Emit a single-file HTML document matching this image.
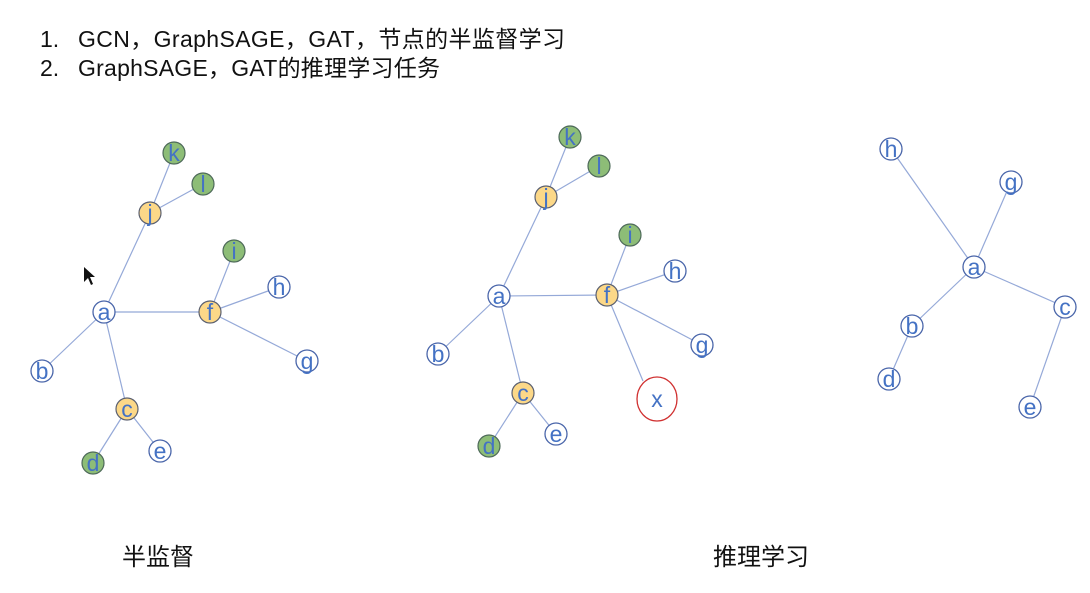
<!DOCTYPE html>
<html><head><meta charset="utf-8">
<style>
html,body{margin:0;padding:0;background:#fff;width:1090px;height:593px;overflow:hidden}
svg{display:block}
.t{font-family:"Liberation Sans","Noto Sans CJK SC",sans-serif;fill:#111}
.n{font-family:"Liberation Sans",sans-serif;font-size:23px;fill:#4472c4;text-anchor:middle}
line{stroke:#95a9d8;stroke-width:1.2}
.w{fill:#fff;stroke:#4a66aa;stroke-width:1.3}
.y{fill:#fcd888;stroke:#5b6070;stroke-width:1.2}
.g{fill:#8dbd77;stroke:#4e6a5a;stroke-width:1.2}
</style></head><body>
<svg width="1090" height="593" viewBox="0 0 1090 593">
<text class="t" x="40" y="47" font-size="23">1.</text>
<text class="t" x="78" y="47" font-size="23" textLength="487" lengthAdjust="spacing">GCN，GraphSAGE，GAT，节点的半监督学习</text>
<text class="t" x="40" y="76" font-size="23">2.</text>
<text class="t" x="78" y="76" font-size="23" textLength="362" lengthAdjust="spacing">GraphSAGE，GAT的推理学习任务</text>
<text class="t" x="122" y="565" font-size="24">半监督</text>
<text class="t" x="713" y="565" font-size="24">推理学习</text>

<!-- graph 1 -->
<g>
<line x1="174" y1="153" x2="150" y2="213"/><line x1="203" y1="184" x2="150" y2="213"/>
<line x1="150" y1="213" x2="104" y2="312"/><line x1="104" y1="312" x2="210" y2="312"/>
<line x1="234" y1="251" x2="210" y2="312"/><line x1="279" y1="287" x2="210" y2="312"/>
<line x1="307" y1="361" x2="210" y2="312"/><line x1="104" y1="312" x2="42" y2="371"/>
<line x1="104" y1="312" x2="127" y2="409"/><line x1="127" y1="409" x2="160" y2="451"/>
<line x1="127" y1="409" x2="93" y2="463"/>
<circle class="g" cx="174" cy="153" r="11"/><text class="n" x="174" y="161">k</text>
<circle class="g" cx="203" cy="184" r="11"/><text class="n" x="203" y="192">l</text>
<circle class="y" cx="150" cy="213" r="11"/><text class="n" x="150" y="221">j</text>
<circle class="g" cx="234" cy="251" r="11"/><text class="n" x="234" y="259">i</text>
<circle class="w" cx="279" cy="287" r="11"/><text class="n" x="279" y="295">h</text>
<circle class="w" cx="104" cy="312" r="11"/><text class="n" x="104" y="320">a</text>
<circle class="y" cx="210" cy="312" r="11"/><text class="n" x="210" y="320">f</text>
<circle class="w" cx="307" cy="361" r="11"/><text class="n" x="307" y="369">g</text>
<circle class="w" cx="42" cy="371" r="11"/><text class="n" x="42" y="379">b</text>
<circle class="y" cx="127" cy="409" r="11"/><text class="n" x="127" y="417">c</text>
<circle class="w" cx="160" cy="451" r="11"/><text class="n" x="160" y="459">e</text>
<circle class="g" cx="93" cy="463" r="11"/><text class="n" x="93" y="471">d</text>
</g>
<path d="M84 267 L84 282 L88 278 L91 285 L93 284 L90 277 L95 277 Z" fill="#111"/>

<!-- graph 2 -->
<g>
<line x1="570" y1="137" x2="546" y2="197"/><line x1="599" y1="166" x2="546" y2="197"/>
<line x1="546" y1="197" x2="499" y2="296"/><line x1="499" y1="296" x2="607" y2="295"/>
<line x1="630" y1="235" x2="607" y2="295"/><line x1="675" y1="271" x2="607" y2="295"/>
<line x1="702" y1="345" x2="607" y2="295"/><line x1="607" y1="295" x2="643" y2="381"/>
<line x1="499" y1="296" x2="438" y2="354"/><line x1="499" y1="296" x2="523" y2="393"/>
<line x1="523" y1="393" x2="556" y2="434"/><line x1="523" y1="393" x2="489" y2="446"/>
<circle class="g" cx="570" cy="137" r="11"/><text class="n" x="570" y="145">k</text>
<circle class="g" cx="599" cy="166" r="11"/><text class="n" x="599" y="174">l</text>
<circle class="y" cx="546" cy="197" r="11"/><text class="n" x="546" y="205">j</text>
<circle class="g" cx="630" cy="235" r="11"/><text class="n" x="630" y="243">i</text>
<circle class="w" cx="675" cy="271" r="11"/><text class="n" x="675" y="279">h</text>
<circle class="w" cx="499" cy="296" r="11"/><text class="n" x="499" y="304">a</text>
<circle class="y" cx="607" cy="295" r="11"/><text class="n" x="607" y="303">f</text>
<circle class="w" cx="702" cy="345" r="11"/><text class="n" x="702" y="353">g</text>
<circle class="w" cx="438" cy="354" r="11"/><text class="n" x="438" y="362">b</text>
<circle class="y" cx="523" cy="393" r="11"/><text class="n" x="523" y="401">c</text>
<circle class="w" cx="556" cy="434" r="11"/><text class="n" x="556" y="442">e</text>
<circle class="g" cx="489" cy="446" r="11"/><text class="n" x="489" y="454">d</text>
<ellipse cx="657" cy="399" rx="20" ry="22" fill="#fff" stroke="#d03030" stroke-width="1.3"/>
<text class="n" x="657" y="407">x</text>
</g>

<!-- graph 3 -->
<g>
<line x1="891" y1="149" x2="974" y2="267"/><line x1="1011" y1="182" x2="974" y2="267"/>
<line x1="974" y1="267" x2="1065" y2="307"/><line x1="974" y1="267" x2="912" y2="326"/>
<line x1="912" y1="326" x2="889" y2="379"/><line x1="1065" y1="307" x2="1030" y2="407"/>
<circle class="w" cx="891" cy="149" r="11"/><text class="n" x="891" y="157">h</text>
<circle class="w" cx="1011" cy="182" r="11"/><text class="n" x="1011" y="190">g</text>
<circle class="w" cx="974" cy="267" r="11"/><text class="n" x="974" y="275">a</text>
<circle class="w" cx="1065" cy="307" r="11"/><text class="n" x="1065" y="315">c</text>
<circle class="w" cx="912" cy="326" r="11"/><text class="n" x="912" y="334">b</text>
<circle class="w" cx="889" cy="379" r="11"/><text class="n" x="889" y="387">d</text>
<circle class="w" cx="1030" cy="407" r="11"/><text class="n" x="1030" y="415">e</text>
</g>
</svg>
</body></html>
